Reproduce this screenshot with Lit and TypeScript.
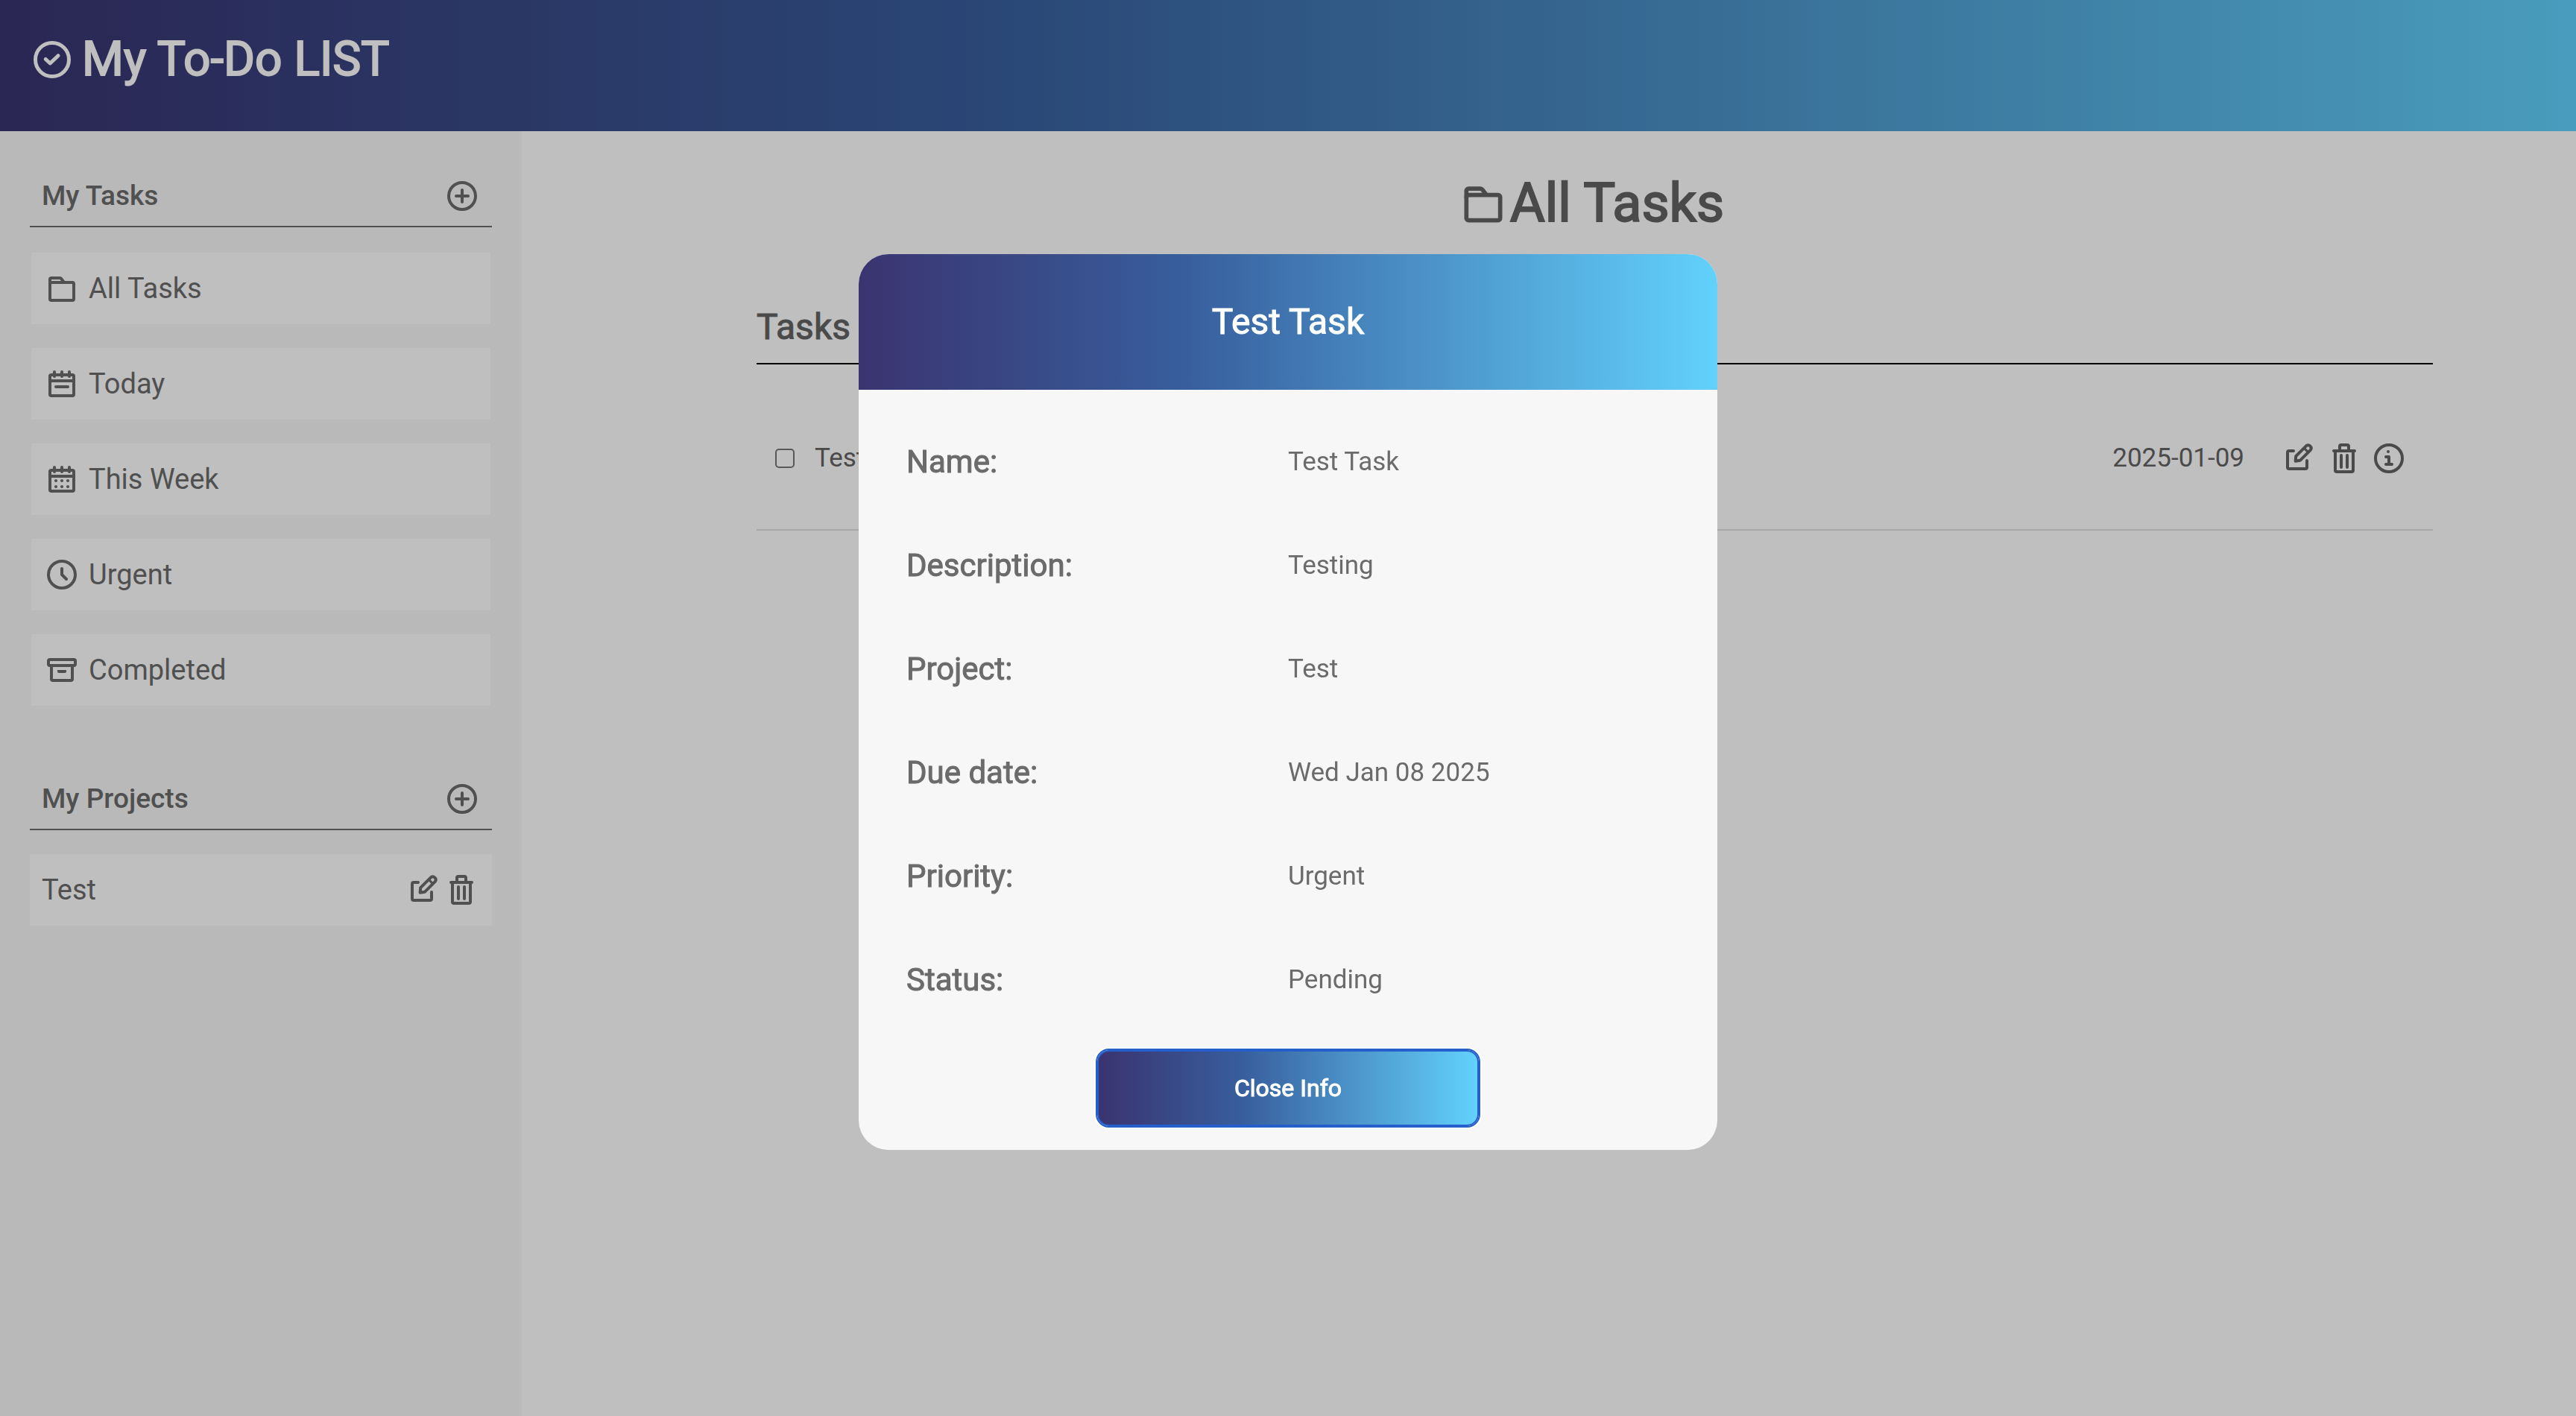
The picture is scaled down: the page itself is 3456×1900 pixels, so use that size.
import { LitElement, html, css, svg, type TemplateResult, type SVGTemplateResult } from "lit";
import { customElement, property, state } from "lit/decorators.js";

type IconName =
  | "check" | "plus" | "folder" | "day" | "week" | "clock"
  | "archive" | "edit" | "trash" | "info";

const calendarFrame = svg`
  <rect x="4" y="6" width="16" height="14" rx="1"></rect>
  <path d="M4 10h16M7 4v3M12 4v3M17 4v3"></path>`;

const icons: Record<IconName, SVGTemplateResult> = {
  check: svg`
    <circle cx="12" cy="12" r="9"></circle>
    <path d="M8.5 11.8l2.4 2.2 4.3-4.1"></path>`,
  plus: svg`
    <circle cx="12" cy="12" r="9"></circle>
    <path d="M12 8v8M8 12h8"></path>`,
  folder: svg`
    <rect x="4" y="8" width="16" height="12" rx="1"></rect>
    <path d="M4 9V6a1 1 0 0 1 1-1h5.6a1.2 1.2 0 0 1 1 .5L13.2 7.6"></path>`,
  day: svg`${calendarFrame}<path d="M8 14h8"></path>`,
  week: svg`${calendarFrame}
    <g class="solid">
      <circle cx="8" cy="13" r="1"></circle>
      <circle cx="12" cy="13" r="1"></circle>
      <circle cx="16" cy="13" r="1"></circle>
      <circle cx="8" cy="17" r="1"></circle>
      <circle cx="12" cy="17" r="1"></circle>
      <circle cx="16" cy="17" r="1"></circle>
    </g>`,
  clock: svg`
    <circle cx="12" cy="12" r="9"></circle>
    <path d="M12 8v4l3 3"></path>`,
  archive: svg`
    <rect x="3" y="5" width="18" height="4" rx="1"></rect>
    <path d="M5 9v9a1 1 0 0 0 1 1h12a1 1 0 0 0 1-1V9"></path>
    <path class="solid" d="M9 12h6v1a1 1 0 0 1-1 1h-4a1 1 0 0 1-1-1z"></path>`,
  edit: svg`
    <path d="M8 7H5a1 1 0 0 0-1 1v10a1 1 0 0 0 1 1h11a1 1 0 0 0 1-1v-4.5"></path>
    <path d="M16.6 3.6a2 2 0 0 1 2.8 2.8l-7 7-3.1.5.3-3.3z"></path>
    <path class="fine" d="M15.3 5.3l2.6 2.6"></path>`,
  trash: svg`
    <path d="M5 7h14M9 7V4a1 1 0 0 1 1-1h4a1 1 0 0 1 1 1v3"></path>
    <path d="M6 7v13a1 1 0 0 0 1 1h10a1 1 0 0 0 1-1V7"></path>
    <path d="M10 10v8M14 10v8"></path>`,
  info: svg`
    <circle cx="12" cy="12" r="9"></circle>
    <circle class="solid" cx="11.5" cy="7.5" r="1"></circle>
    <path d="M10 11h2v5M10 16h4"></path>`,
};

@customElement("app-icon")
class AppIcon extends LitElement {
  @property() name: IconName = "check";

  static styles = css`
    :host {
      display: block;
      flex: none;
      width: 48px;
      height: 48px;
    }
    svg {
      display: block;
      width: 100%;
      height: 100%;
      fill: none;
      stroke: currentColor;
      stroke-width: 2;
      stroke-linecap: round;
      stroke-linejoin: round;
    }
    .solid {
      fill: currentColor;
      stroke: none;
    }
    .fine {
      stroke-width: 1.6;
      stroke-linecap: butt;
    }
  `;

  render(): TemplateResult {
    return html`<svg viewBox="0 0 24 24" aria-hidden="true">${icons[this.name]}</svg>`;
  }
}

interface Task {
  name: string;
  description: string;
  project: string;
  listDate: string;
  dueDate: string;
  priority: string;
  done: boolean;
}

const filters: { label: string; icon: IconName }[] = [
  { label: "All Tasks", icon: "folder" },
  { label: "Today", icon: "day" },
  { label: "This Week", icon: "week" },
  { label: "Urgent", icon: "clock" },
  { label: "Completed", icon: "archive" },
];

@customElement("app-root")
class AppRoot extends LitElement {
  @state() private filter = filters[0];
  @state() private projects = ["Test"];
  @state() private tasks: Task[] = [
    {
      name: "Test Task",
      description: "Testing",
      project: "Test",
      listDate: "2025-01-09",
      dueDate: "Wed Jan 08 2025",
      priority: "Urgent",
      done: false,
    },
  ];
  @state() private shown: Task | null = this.tasks[0];

  static styles = css`
    :host {
      --brand: linear-gradient(90deg, #3a3470, #385e9d 38%, #62d1fc);
      display: flex;
      flex-direction: column;
      min-height: 100vh;
      background: #ffffff;
      color: #636363;
      font-family: Roboto, "Liberation Sans", sans-serif;
      font-size: 35px;
      line-height: 48px;
    }
    * {
      box-sizing: border-box;
    }
    h1,
    h2,
    h3,
    dl,
    dd,
    ul {
      margin: 0;
      padding: 0;
      font-weight: 400;
    }
    ul {
      list-style: none;
    }
    button {
      border: 0;
      padding: 0;
      background: none;
      color: inherit;
      font: inherit;
      text-align: left;
      cursor: pointer;
    }

    .top {
      display: flex;
      align-items: center;
      gap: 10px;
      padding: 42px 40px 58px;
      background: var(--brand);
      color: #ffffff;
    }
    .top app-icon {
      width: 60px;
      height: 60px;
    }
    .brand {
      font-size: 64px;
      line-height: 76px;
      -webkit-text-stroke: 2px currentColor;
    }

    .body {
      flex: 1;
      display: grid;
      grid-template-columns: 700px 1fr;
    }

    .side {
      padding: 47px 40px;
      background: #f7f7f7;
      color: #6b6b6b;
    }
    .side-head {
      display: flex;
      align-items: center;
      justify-content: space-between;
      padding: 16px;
      border-bottom: 2px solid #6b6b6b;
    }
    .side-title {
      font-size: 37px;
      font-weight: 500;
    }
    .filters {
      display: flex;
      flex-direction: column;
      gap: 32px;
      padding: 34px 2px 85px;
    }
    .filter {
      display: flex;
      align-items: center;
      gap: 12px;
      width: 100%;
      padding: 24px 17px;
      background: #ffffff;
      font-size: 38px;
    }
    .projects {
      padding-top: 32px;
    }
    .project {
      display: flex;
      align-items: center;
      gap: 2px;
      padding: 24px 17px 24px 16px;
      background: #ffffff;
      font-size: 38px;
    }
    .grow {
      flex: 1;
    }

    .main {
      padding: 55px 192px 64px 315px;
    }
    .page-title {
      display: flex;
      align-items: center;
      justify-content: center;
      gap: 2px;
      padding-right: 10px;
      font-size: 72px;
      line-height: 84px;
      -webkit-text-stroke: 2px currentColor;
    }
    .page-title app-icon {
      width: 68px;
      height: 68px;
    }
    .list-title {
      margin-top: 96px;
      padding-bottom: 20px;
      border-bottom: 2px solid #000000;
      font-size: 48px;
      line-height: 56px;
      -webkit-text-stroke: 1px currentColor;
    }
    .task {
      display: flex;
      align-items: center;
      margin-top: 32px;
      padding: 70px 35px 71px 25px;
      border-bottom: 2px solid #e0e0e0;
    }
    .task-name {
      flex: 1;
      display: flex;
      align-items: center;
      gap: 27px;
    }
    .tick {
      appearance: none;
      width: 26px;
      height: 26px;
      margin: 0;
      border: 2px solid #767676;
      border-radius: 5px;
    }
    .tick:checked {
      background: #767676;
    }
    .actions {
      display: flex;
      gap: 12px;
      margin-left: 50px;
    }

    .backdrop {
      position: fixed;
      inset: 0;
      display: flex;
      align-items: center;
      justify-content: center;
      padding-bottom: 16px;
      background: rgba(0, 0, 0, 0.25);
    }
    .modal {
      display: flex;
      flex-direction: column;
      width: 33.3333%;
      min-width: 900px;
      border-radius: 40px;
      overflow: hidden;
      background: #f7f7f7;
      color: #6b6b6b;
    }
    .modal-title {
      padding: 63px 64px;
      background: var(--brand);
      color: #ffffff;
      font-size: 48px;
      line-height: 56px;
      text-align: center;
      -webkit-text-stroke: 1px currentColor;
    }
    .details {
      padding: 27px 64px 25px;
    }
    .detail {
      display: grid;
      grid-template-columns: 1fr 1fr;
      align-items: center;
      height: 139px;
    }
    .detail dt {
      font-size: 42px;
      -webkit-text-stroke: 1px currentColor;
    }
    .modal-foot {
      display: flex;
      justify-content: center;
      padding: 0 64px 32px;
    }
    .close {
      width: 50%;
      padding: 25px;
      border: 2px solid #265fc9;
      border-radius: 16px;
      outline: 2px solid #265fc9;
      box-shadow: 0 0 0 4px #ffffff;
      background: var(--brand);
      color: #ffffff;
      font-size: 32px;
      text-align: center;
      -webkit-text-stroke: 1px currentColor;
    }
  `;

  private toggle(task: Task): void {
    this.tasks = this.tasks.map((t) => (t === task ? { ...t, done: !t.done } : t));
  }

  private iconButton(icon: IconName, label: string, action?: () => void): TemplateResult {
    return html`<button type="button" aria-label=${label} @click=${() => action?.()}>
      <app-icon name=${icon}></app-icon>
    </button>`;
  }

  private renderSide(): TemplateResult {
    return html`
      <aside class="side">
        <div class="side-head">
          <h2 class="side-title">My Tasks</h2>
          ${this.iconButton("plus", "Add task")}
        </div>
        <ul class="filters">
          ${filters.map(
            (f) => html`<li>
              <button class="filter" type="button" @click=${() => (this.filter = f)}>
                <app-icon name=${f.icon}></app-icon>${f.label}
              </button>
            </li>`
          )}
        </ul>
        <div class="side-head">
          <h2 class="side-title">My Projects</h2>
          ${this.iconButton("plus", "Add project")}
        </div>
        <ul class="projects">
          ${this.projects.map(
            (name) => html`<li class="project">
              <button class="grow" type="button">${name}</button>
              ${this.iconButton("edit", "Edit project")}
              ${this.iconButton("trash", "Delete project")}
            </li>`
          )}
        </ul>
      </aside>
    `;
  }

  private renderMain(): TemplateResult {
    return html`
      <main class="main">
        <h2 class="page-title">
          <app-icon name=${this.filter.icon}></app-icon>${this.filter.label}
        </h2>
        <h3 class="list-title">Tasks</h3>
        <ul>
          ${this.tasks.map(
            (t) => html`<li class="task">
              <label class="task-name">
                <input
                  class="tick"
                  type="checkbox"
                  .checked=${t.done}
                  @change=${() => this.toggle(t)}
                />
                ${t.name}
              </label>
              <time>${t.listDate}</time>
              <div class="actions">
                ${this.iconButton("edit", "Edit task")}
                ${this.iconButton("trash", "Delete task")}
                ${this.iconButton("info", "Task info", () => (this.shown = t))}
              </div>
            </li>`
          )}
        </ul>
      </main>
    `;
  }

  private renderModal(task: Task): TemplateResult {
    const rows = [
      ["Name:", task.name],
      ["Description:", task.description],
      ["Project:", task.project],
      ["Due date:", task.dueDate],
      ["Priority:", task.priority],
      ["Status:", task.done ? "Completed" : "Pending"],
    ];
    return html`
      <div class="backdrop">
        <section class="modal" role="dialog" aria-modal="true" aria-labelledby="modal-title">
          <h2 class="modal-title" id="modal-title">${task.name}</h2>
          <dl class="details">
            ${rows.map(
              ([label, value]) => html`<div class="detail">
                <dt>${label}</dt>
                <dd>${value}</dd>
              </div>`
            )}
          </dl>
          <div class="modal-foot">
            <button class="close" type="button" @click=${() => (this.shown = null)}>
              Close Info
            </button>
          </div>
        </section>
      </div>
    `;
  }

  render(): TemplateResult {
    return html`
      <header class="top">
        <app-icon name="check"></app-icon>
        <h1 class="brand">My To-Do LIST</h1>
      </header>
      <div class="body">${this.renderSide()} ${this.renderMain()}</div>
      ${this.shown ? this.renderModal(this.shown) : ""}
    `;
  }
}
